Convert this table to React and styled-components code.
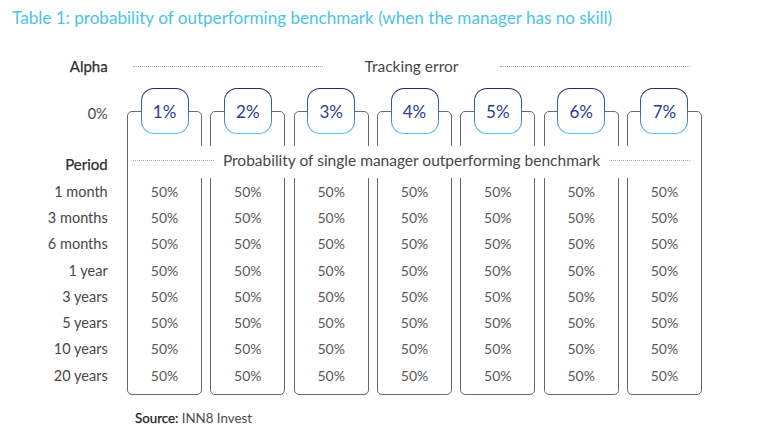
import React from "react";
import styled, { createGlobalStyle } from "styled-components";

const GlobalStyle = createGlobalStyle`
  html, body {
    margin: 0;
    padding: 0;
    background: #ffffff;
    font-family: Lato, "Open Sans", "Liberation Sans", sans-serif;
  }
`;

const Page = styled.div`
  width: 768px;
  height: 437px;
  overflow: hidden;
  background: #fff;
`;

const Title = styled.h1`
  margin: 0;
  padding: 8px 0 0 12px;
  font-size: 17.1px;
  line-height: 20px;
  font-weight: 400;
  color: #4cc4e6;
  white-space: nowrap;
`;

const Table = styled.div`
  display: grid;
  margin-top: 24px;
  grid-template-columns: 118.7px repeat(7, 75px);
  grid-template-rows: 28px 66px 32px repeat(8, 26.3px) 7px;
  column-gap: 8.33px;
`;

const Label = styled.div`
  grid-column: 1;
  grid-row: ${(p) => p.$row};
  display: flex;
  align-items: center;
  justify-content: flex-end;
  padding-right: 11px;
  padding-top: ${(p) => p.$shift || 0}px;
  font-size: ${(p) => (p.$strong ? 15 : 14.5)}px;
  color: ${(p) => (p.$strong ? "#2e2e2e" : "#474747")};
  -webkit-text-stroke: ${(p) => (p.$strong ? "0.25px #2e2e2e" : "0")};
  white-space: nowrap;
`;

const SpanBar = styled.div`
  grid-column: 2 / 9;
  grid-row: ${(p) => p.$row};
  display: flex;
  align-items: center;
  gap: ${(p) => p.$gap}px;
  padding: ${(p) => p.$pad};
  margin: ${(p) => p.$margin || "0"};
  padding-bottom: ${(p) => p.$lift || 0}px;
  background: ${(p) => (p.$cover ? "#fff" : "transparent")};
  z-index: 2;
`;

const Dots = styled.span`
  flex: 1;
  border-top: 1px dotted #a5a5a5;
  height: 0;
`;

const BarText = styled.span`
  font-size: 15.5px;
  color: #474747;
  white-space: nowrap;
`;

const Column = styled.div`
  grid-column: ${(p) => p.$col};
  grid-row: 2 / 13;
  display: flex;
  flex-direction: column;
  padding-top: 8px;
`;

const Pill = styled.div`
  align-self: center;
  width: 48px;
  height: 46px;
  box-sizing: border-box;
  margin-bottom: -23px;
  border-radius: 13px;
  border: 1.5px solid transparent;
  background: linear-gradient(#fff, #fff) padding-box,
    linear-gradient(180deg, #1e2b6c 0%, #3f6fb5 55%, #5cc3ec 100%) border-box;
  display: flex;
  align-items: center;
  justify-content: center;
  font-size: 17px;
  color: #2d3b8a;
  z-index: 1;
`;

const Frame = styled.div`
  flex: 1;
  border: 1.5px solid #6a6a6a;
  border-radius: 5px;
`;

const Value = styled.div`
  grid-column: ${(p) => p.$col};
  grid-row: ${(p) => p.$row};
  display: flex;
  align-items: center;
  justify-content: center;
  font-size: 14px;
  color: #595959;
  z-index: 1;
`;

const Source = styled.p`
  margin: 15px 0 0 135px;
  font-size: 13.3px;
  line-height: 16px;
  color: #4a4a4a;
  b {
    font-weight: 400;
    color: #222;
    -webkit-text-stroke: 0.25px #222;
  }
`;

const errors = ["1%", "2%", "3%", "4%", "5%", "6%", "7%"];
const periods = ["1 month", "3 months", "6 months", "1 year", "3 years", "5 years", "10 years", "20 years"];

export default function App() {
  return (
    <Page>
      <GlobalStyle />
      <Title>Table 1: probability of outperforming benchmark (when the manager has no skill)</Title>
      <Table>
        <Label $row={1} $strong>Alpha</Label>
        <SpanBar $row={1} $gap={42} $pad="0 12px 0 6px">
          <Dots />
          <BarText>Tracking error</BarText>
          <Dots />
        </SpanBar>

        <Label $row={2}>0%</Label>
        {errors.map((e, i) => (
          <Column key={e} $col={i + 2}>
            <Pill>{e}</Pill>
            <Frame />
          </Column>
        ))}

        <Label $row={3} $shift={4} $strong>Period</Label>
        <SpanBar $row={3} $gap={9} $pad="0 9px 0 3px" $margin="0 3px" $lift={4} $cover>
          <Dots />
          <BarText>Probability of single manager outperforming benchmark</BarText>
          <Dots />
        </SpanBar>

        {periods.map((p, r) => (
          <React.Fragment key={p}>
            <Label $row={r + 4}>{p}</Label>
            {errors.map((e, i) => (
              <Value key={e} $col={i + 2} $row={r + 4}>50%</Value>
            ))}
          </React.Fragment>
        ))}
      </Table>
      <Source><b>Source:</b> INN8 Invest</Source>
    </Page>
  );
}
